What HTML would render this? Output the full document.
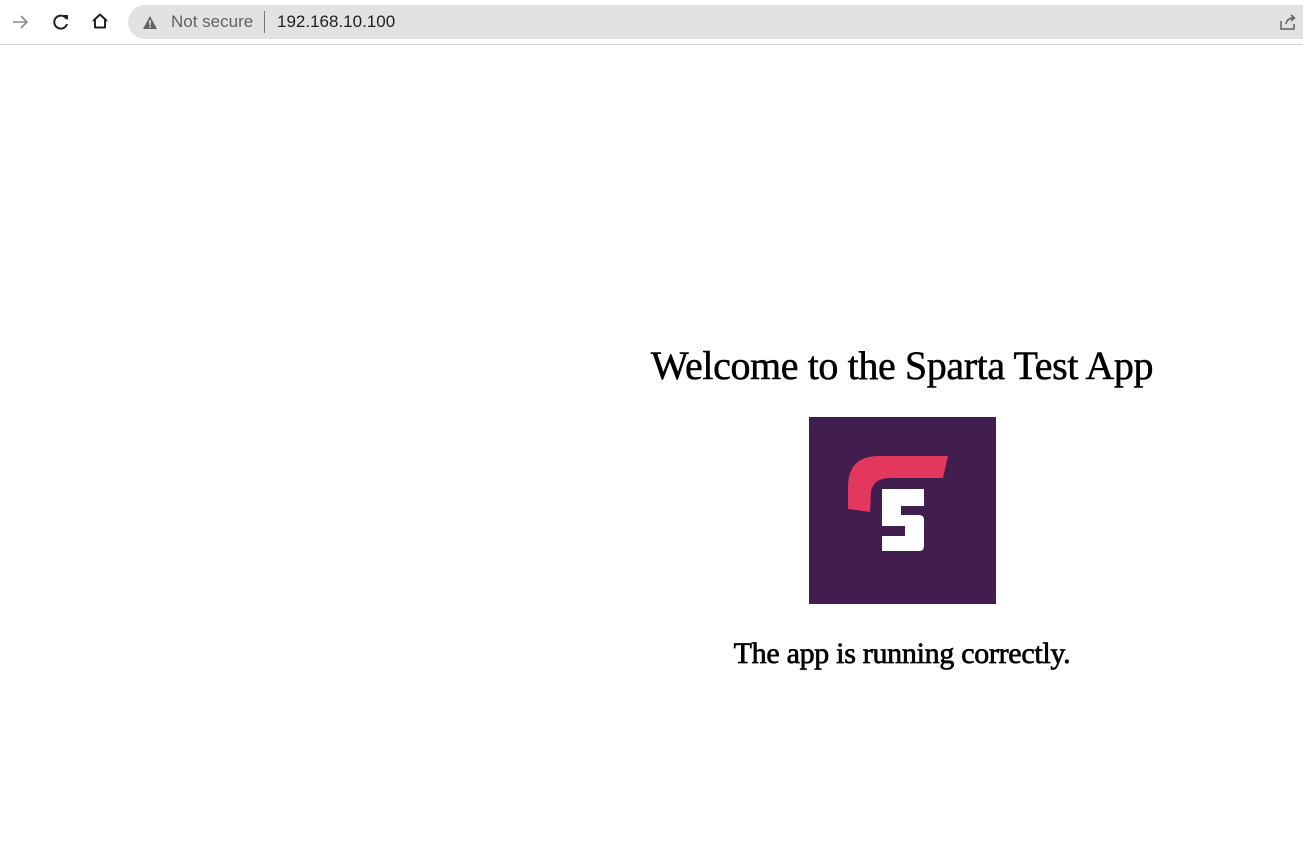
<!DOCTYPE html>
<html><head><style>
body{margin:0;width:1303px;height:861px;background:#fff;position:relative;overflow:hidden;font-family:"Liberation Sans",sans-serif}
.bar{position:absolute;left:0;top:0;width:1303px;height:44px;background:#fff;border-bottom:1px solid #d6d6d6}
.omni{position:absolute;left:128px;top:5px;width:1175px;height:34px;background:#e2e2e2;border-radius:17px 0 0 17px}
.t{position:absolute;white-space:nowrap}
h1,p{margin:0;position:absolute;white-space:nowrap;font-family:"Liberation Serif","DejaVu Serif",serif;color:#000;text-align:center;left:602px;width:600px}
</style></head><body>
<div class="bar">
<svg class="t" style="left:10px;top:12px" width="20" height="20" viewBox="0 0 20 20"><path d="M3 10H17M11 4L17 10L11 16" stroke="#8a8a8a" stroke-width="1.6" fill="none"/></svg>
<svg class="t" style="left:51px;top:12px" width="20" height="20" viewBox="0 0 20 20"><path d="M15.5 7A6.5 6.5 0 1 0 16 12" stroke="#222" stroke-width="2" fill="none"/><path d="M12 3H17V8Z" fill="#222"/></svg>
<svg class="t" style="left:90px;top:11px" width="20" height="20" viewBox="0 0 20 20"><path d="M3 10L10 3.5L17 10M5 8.5V16.5H15V8.5" stroke="#222" stroke-width="2" fill="none" stroke-linejoin="round"/></svg>
<div class="omni">
<svg class="t" style="left:14px;top:10px" width="16" height="15" viewBox="0 0 16 15"><path d="M8 1L15 14H1Z" fill="#5f6368"/><rect x="7.2" y="5" width="1.6" height="5" fill="#e2e2e2"/><rect x="7.2" y="11" width="1.6" height="1.6" fill="#e2e2e2"/></svg>
<span class="t" style="left:43px;top:7px;font-size:17px;color:#5f6368">Not secure</span>
<span class="t" style="left:136px;top:6px;width:1px;height:22px;background:#777"></span>
<span class="t" style="left:149px;top:7px;font-size:17px;color:#202124">192.168.10.100</span>
<svg class="t" style="left:1150px;top:8px" width="20" height="18" viewBox="0 0 20 18"><path d="M3 8V16H16V11M8 11Q9 5 16 5M13 2L16.5 5L13 8" stroke="#5f6368" stroke-width="1.5" fill="none"/></svg>
</div>
</div>
<h1 style="top:342px;font-size:40px;font-weight:normal;letter-spacing:-0.4px;-webkit-text-stroke:0.5px #000">Welcome to the Sparta Test App</h1>
<svg class="t" style="left:809px;top:417px" width="187" height="187" viewBox="0 0 187 187">
<rect width="187" height="187" fill="#421e4f"/>
<path d="M39,92 L39,70 Q39,39 70,39 L139,39 L134,61 L82,61 Q64,61 62,75 L61,95 Z" fill="#e3375e"/>
<path d="M73,72 H115 V89 H92 V98 H110 Q115,98 115,103 V129 Q115,134 110,134 H73 V119 H96 V109 H73 Z" fill="#fff"/>
</svg>
<p style="top:637px;font-size:30px;font-weight:normal;letter-spacing:-0.3px;-webkit-text-stroke:0.7px #000">The app is running correctly.</p>
</body></html>
